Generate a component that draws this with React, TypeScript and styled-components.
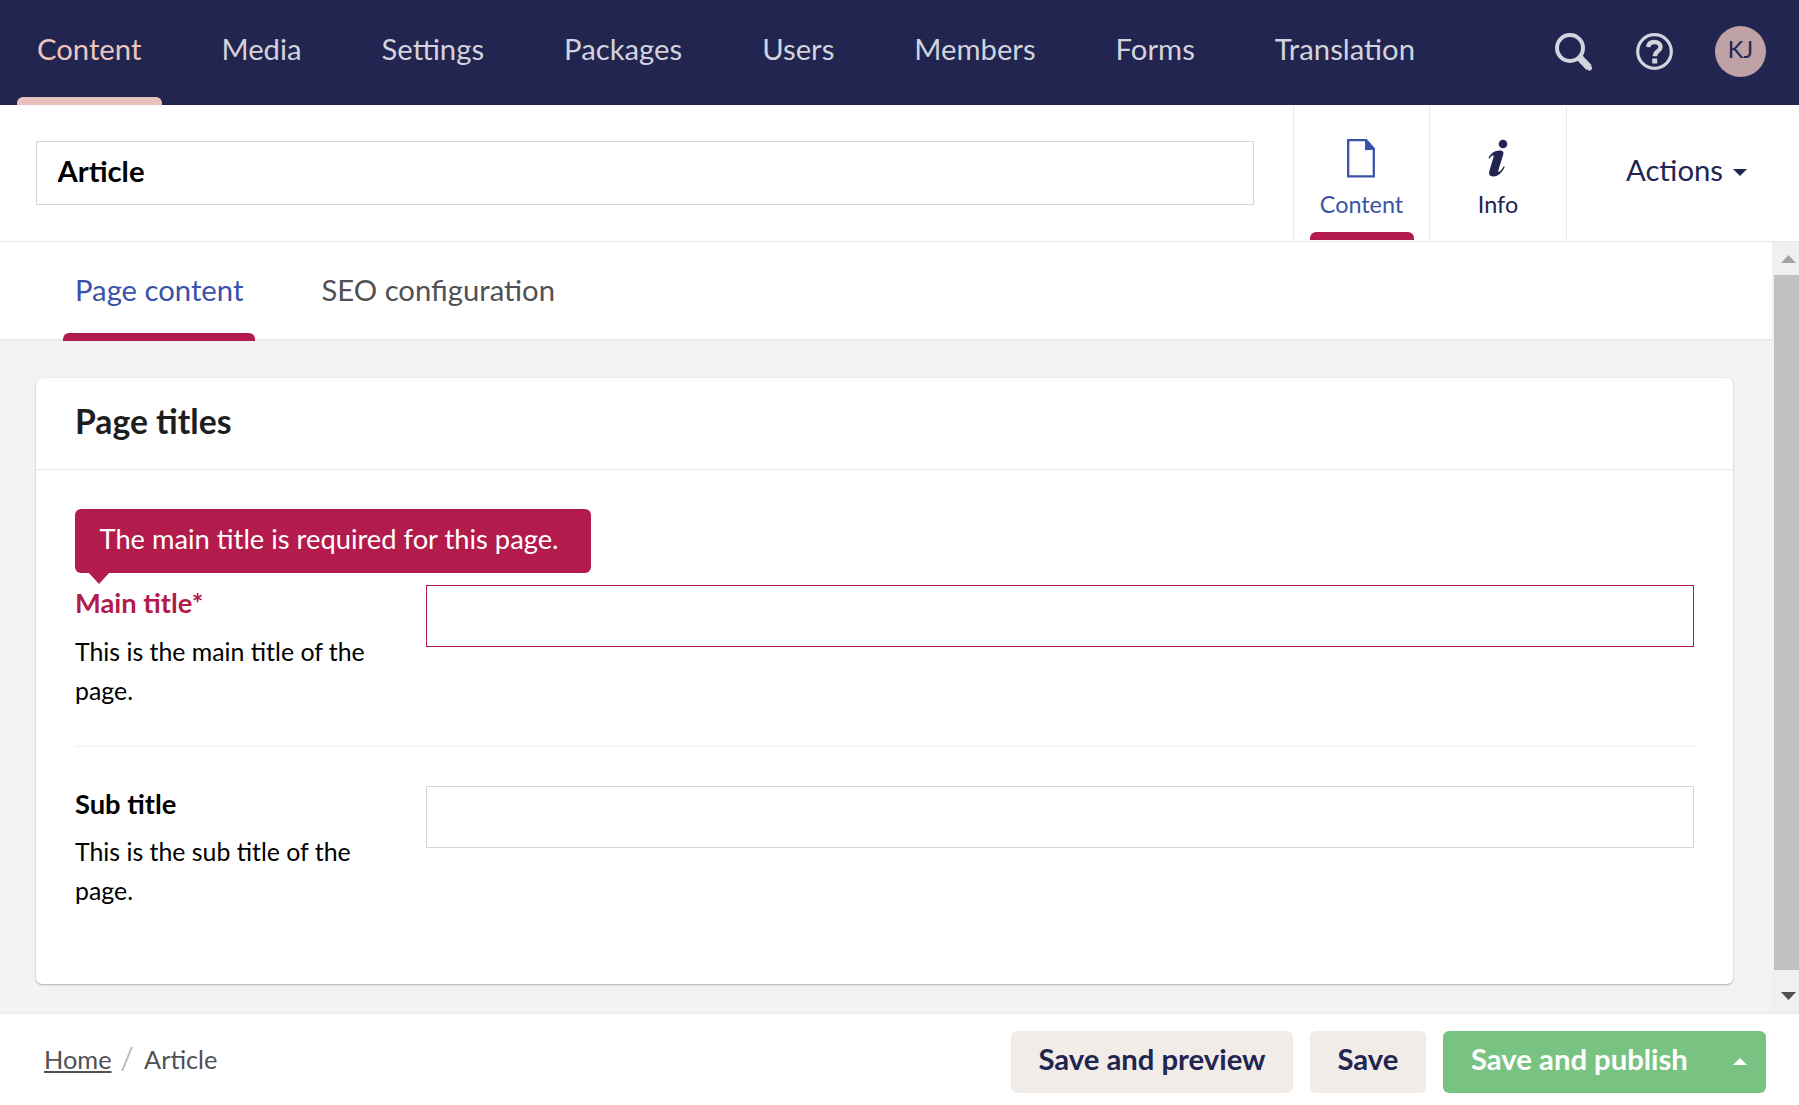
import React from "react";
import styled, { createGlobalStyle } from "styled-components";

const navy = "#212550";
const blue = "#3a53a8";
const red = "#b21b4c";
const line = "#e8e8e8";
const field = "#d6d6d6";

const GlobalStyle = createGlobalStyle`
  *, *::before, *::after { box-sizing: border-box; }
  html, body, #root { height: 100%; }
  body {
    margin: 0;
    overflow: hidden;
    background: #fff;
    color: #000;
    font-family: Lato, "Open Sans", sans-serif;
    font-size: 29.25px;
  }
  button, input { font: inherit; color: inherit; border: 0; margin: 0; padding: 0; background: none; }
`;

const Shell = styled.div`
  width: 1799px;
  height: 1105px;
  display: flex;
  flex-direction: column;
`;

const TopBar = styled.header`
  flex: 0 0 105px;
  display: flex;
  justify-content: space-between;
  background: ${navy};
`;

const Sections = styled.nav`
  display: flex;
  gap: 39px;
  padding-left: 17px;
`;

const Section = styled.a<{ $active?: boolean }>`
  display: flex;
  flex-direction: column;
  justify-content: space-between;
  padding: 31px 0 0;
  line-height: 35px;
  color: ${(p) => (p.$active ? "#efc4bd" : "#d2d3dc")};
  &::after {
    content: "";
    height: 8px;
    border-radius: 6px 6px 0 0;
    background: ${(p) => (p.$active ? "#e8c1bc" : "transparent")};
  }
`;

const SectionText = styled.span`
  padding: 0 21px 0 20px;
`;

const Tools = styled.div`
  display: flex;
  align-items: center;
  padding: 0 33px 2px 0;
`;

const SearchIcon = styled.svg`
  width: 38px;
  height: 38px;
  margin-right: 43px;
`;

const HelpIcon = styled.svg`
  width: 37px;
  height: 37px;
  margin-right: 42px;
`;

const Avatar = styled.div`
  width: 51px;
  height: 51px;
  border-radius: 50%;
  background: #bea2a5;
  color: ${navy};
  font-size: 23.4px;
  line-height: 47px;
  text-align: center;
`;

const EditorHeader = styled.div`
  flex: 0 0 137px;
  display: flex;
  border-bottom: 1px solid ${line};
  padding: 1px 0 1px 36px;
`;

const NameInput = styled.input`
  width: 1218px;
  height: 64px;
  margin: 35px 39px 0 0;
  border: 1px solid ${field};
  padding: 0 20px 6px 20.5px;
  font-weight: 700;
  outline: none;
`;

const EditorApp = styled.button<{ $active?: boolean; $width: number }>`
  width: ${(p) => p.$width}px;
  border-left: 1px solid ${line};
  display: flex;
  flex-direction: column;
  align-items: center;
  color: ${(p) => (p.$active ? blue : navy)};
  font-size: 23.4px;
  line-height: 28px;
  &::after {
    content: "";
    width: 104px;
    height: 8px;
    margin-top: auto;
    border-radius: 6px 6px 0 0;
    background: ${(p) => (p.$active ? red : "transparent")};
  }
`;

const AppIcon = styled.svg`
  width: 40px;
  height: 40px;
  margin: 32px 0 12px;
`;

const Actions = styled.button`
  flex: 1;
  border-left: 1px solid ${line};
  display: flex;
  align-items: center;
  gap: 10px;
  padding: 0 0 7px 59px;
  color: ${navy};
`;

const Caret = styled.span<{ $up?: boolean; $color: string }>`
  width: 0;
  height: 0;
  border: 7px solid transparent;
  ${(p) =>
    p.$up
      ? `border-top: 0; border-bottom-color: ${p.$color};`
      : `border-bottom: 0; border-top-color: ${p.$color};`}
`;

const CaretBox = styled.span<{ $drop: number }>`
  padding-top: ${(p) => p.$drop}px;
  display: flex;
`;

const Middle = styled.div`
  flex: 0 0 771px;
  display: flex;
`;

const Content = styled.main`
  flex: 1;
  display: flex;
  flex-direction: column;
  background: #f3f3f3;
`;

const Tabs = styled.div`
  flex: 0 0 99px;
  display: flex;
  gap: 54px;
  padding-left: 63px;
  background: #fff;
  box-shadow: inset 0 -2px ${line};
`;

const Tab = styled.a<{ $active?: boolean }>`
  display: flex;
  flex-direction: column;
  justify-content: space-between;
  padding-top: 30px;
  line-height: 35px;
  color: ${(p) => (p.$active ? blue : "#515054")};
  &::after {
    content: "";
    height: 8px;
    border-radius: 6px 6px 0 0;
    background: ${(p) => (p.$active ? red : "transparent")};
  }
`;

const TabText = styled.span`
  padding: 0 12px;
`;

const Card = styled.section`
  width: 1697px;
  height: 606px;
  margin: 37px 0 0 36px;
  border-radius: 6px;
  background: #fff;
  box-shadow: 0 1px 2px rgba(0, 0, 0, 0.28), 0 0 1px rgba(0, 0, 0, 0.12);
`;

const CardTitle = styled.h2`
  margin: 0;
  height: 92px;
  padding: 23px 39px 0;
  border-bottom: 1px solid ${line};
  font-size: 33.7px;
  line-height: 40px;
  font-weight: 700;
  color: #1e1e20;
`;

const CardBody = styled.div`
  padding: 39px 39px 0;
`;

const Message = styled.div`
  position: relative;
  width: 516px;
  height: 64px;
  margin-bottom: 12px;
  padding: 13px 24.5px;
  border-radius: 6px;
  background: ${red};
  color: #fff;
  font-size: 27.3px;
  line-height: 33px;
  white-space: nowrap;
`;

const MessageArrow = styled.span`
  position: absolute;
  left: 13px;
  top: 63px;
  border: 11px solid transparent;
  border-top: 12px solid ${red};
  border-bottom: 0;
`;

const Property = styled.div<{ $last?: boolean }>`
  display: flex;
  height: ${(p) => (p.$last ? 200 : 162)}px;
  margin-bottom: 39px;
  border-bottom: ${(p) => (p.$last ? "0" : "2px solid #f6f6f6")};
`;

const PropertyInfo = styled.div`
  width: 351px;
  padding-top: 1px;
`;

const Label = styled.label<{ $invalid?: boolean }>`
  display: block;
  font-size: 27.3px;
  line-height: 34px;
  font-weight: 700;
  color: ${(p) => (p.$invalid ? red : "#000")};
`;

const Description = styled.p<{ $gap: number }>`
  width: 312px;
  margin: ${(p) => p.$gap}px 0 0;
  font-size: 24.86px;
  line-height: 39px;
`;

const TextInput = styled.input<{ $invalid?: boolean }>`
  flex: 1;
  height: 62px;
  border: 1px solid ${(p) => (p.$invalid ? red : field)};
  padding: 0 12px;
  outline: none;
`;

const Scrollbar = styled.div`
  flex: 0 0 27px;
  display: flex;
  flex-direction: column;
  align-items: flex-end;
  justify-content: space-between;
  background: #f0f0f0;
  padding: 13px 0 13px 2px;
`;

const Arrow = styled.svg`
  width: 25px;
  height: 8px;
  display: block;
`;

const Thumb = styled.div`
  width: 25px;
  height: 695px;
  margin: 12px 0 22px;
  background: #c1c1c1;
`;

const Footer = styled.footer`
  flex: 1;
  display: flex;
  justify-content: space-between;
  border-top: 1px solid ${line};
  padding: 17px 33px 0 44px;
`;

const Breadcrumb = styled.nav`
  display: flex;
  height: 56px;
  align-items: center;
  font-size: 25.35px;
  color: #515054;
`;

const Home = styled.a`
  text-decoration: underline;
  text-decoration-thickness: 2px;
  text-underline-offset: 2px;
`;

const Slash = styled.svg`
  width: 12px;
  height: 28px;
  margin: 0 11px 0 9.5px;
`;

const Buttons = styled.div`
  display: flex;
  gap: 17px;
`;

const Button = styled.button<{ $width: number; $primary?: boolean }>`
  width: ${(p) => p.$width}px;
  height: 62px;
  display: flex;
  align-items: center;
  justify-content: ${(p) => (p.$primary ? "space-between" : "center")};
  padding: ${(p) => (p.$primary ? "0 19px 8px 28px" : "0 0 8px")};
  border-radius: 6px;
  background: ${(p) => (p.$primary ? "#79c382" : "#f1ece8")};
  color: ${(p) => (p.$primary ? "#fff" : navy)};
  font-weight: 700;
`;

const sections = ["Content", "Media", "Settings", "Packages", "Users", "Members", "Forms", "Translation"];

export default function App() {
  return (
    <Shell>
      <GlobalStyle />
      <TopBar>
        <Sections>
          {sections.map((name, i) => (
            <Section key={name} $active={i === 0}>
              <SectionText>{name}</SectionText>
            </Section>
          ))}
        </Sections>
        <Tools>
          <SearchIcon viewBox="0 0 38 38" fill="none" stroke="#d2d3dc">
            <circle cx="15" cy="15" r="13" strokeWidth="4" />
            <path d="M24.5 24.5 34 34.5" strokeWidth="7" />
            <path d="M33 33.5l1.5 1.5" strokeWidth="5" strokeLinecap="round" />
          </SearchIcon>
          <HelpIcon viewBox="0 0 37 37" fill="none" stroke="#d2d3dc">
            <circle cx="18.5" cy="18.5" r="16.8" strokeWidth="3.2" />
            <path d="M12.3 14.2c.2-3.7 2.8-5.2 6-5.2 3.5 0 6.2 1.7 6.2 4.9 0 4.3-5.6 4.2-5.6 9.3" strokeWidth="4.4" />
            <path d="M18.7 25.5v5" strokeWidth="5" />
          </HelpIcon>
          <Avatar>KJ</Avatar>
        </Tools>
      </TopBar>
      <EditorHeader>
        <NameInput defaultValue="Article" aria-label="Name" />
        <EditorApp $active $width={136}>
          <AppIcon viewBox="0 0 40 40">
            <path d="M6.2 2.2h18l7.6 8.5v27.6H6.200z" fill="none" stroke={blue} strokeWidth="2.3" />
            <path d="M23 1.500 33 11 32.500 11.800 23 12.200z" fill={blue} />
          </AppIcon>
          Content
        </EditorApp>
        <EditorApp $width={137}>
          <AppIcon viewBox="0 0 40 40" fill={navy}>
            <circle cx="25" cy="6" r="4.3" />
            <path d="M10.500 20c2-5 7-8 12-7.500 3 .4 3.300 2.200 2.600 4.600l-4.800 15.500c-.3 1.200.4 1.500 1.300.8 1.600-1.200 3-3 4.200-5.200l1 .6c-2.200 5-6.300 9.700-11.500 9.700-3.800 0-4.800-2.200-4-5.200l4.300-14.500c.4-1.400-.6-1.800-1.600-1-1 .7-1.800 1.700-2.500 2.900z" />
          </AppIcon>
          Info
        </EditorApp>
        <Actions>
          Actions
          <CaretBox $drop={5}>
            <Caret $color={navy} />
          </CaretBox>
        </Actions>
      </EditorHeader>
      <Middle>
        <Content>
          <Tabs>
            <Tab $active>
              <TabText>Page content</TabText>
            </Tab>
            <Tab>
              <TabText>SEO configuration</TabText>
            </Tab>
          </Tabs>
          <Card>
            <CardTitle>Page titles</CardTitle>
            <CardBody>
              <Message>
                The main title is required for this page.
                <MessageArrow />
              </Message>
              <Property>
                <PropertyInfo>
                  <Label $invalid>Main title*</Label>
                  <Description $gap={12}>This is the main title of the page.</Description>
                </PropertyInfo>
                <TextInput $invalid aria-label="Main title" />
              </Property>
              <Property $last>
                <PropertyInfo>
                  <Label>Sub title</Label>
                  <Description $gap={11}>This is the sub title of the page.</Description>
                </PropertyInfo>
                <TextInput aria-label="Sub title" />
              </Property>
            </CardBody>
          </Card>
        </Content>
        <Scrollbar>
          <Arrow viewBox="0 0 25 8">
            <path d="M7 8 14.5 0 22 8z" fill="#a3a3a3" />
          </Arrow>
          <Thumb />
          <Arrow viewBox="0 0 25 8">
            <path d="M7 0 14.5 8 22 0z" fill="#505050" />
          </Arrow>
        </Scrollbar>
      </Middle>
      <Footer>
        <Breadcrumb>
          <Home>Home</Home>
          <Slash viewBox="0 0 12 28">
            <path d="M1.2 26 10.8 2" stroke="#bbbabf" strokeWidth="2" />
          </Slash>
          <span>Article</span>
        </Breadcrumb>
        <Buttons>
          <Button $width={282}>Save and preview</Button>
          <Button $width={116}>Save</Button>
          <Button $width={323} $primary>
            Save and publish
            <CaretBox $drop={7}>
              <Caret $up $color="#fff" />
            </CaretBox>
          </Button>
        </Buttons>
      </Footer>
    </Shell>
  );
}
